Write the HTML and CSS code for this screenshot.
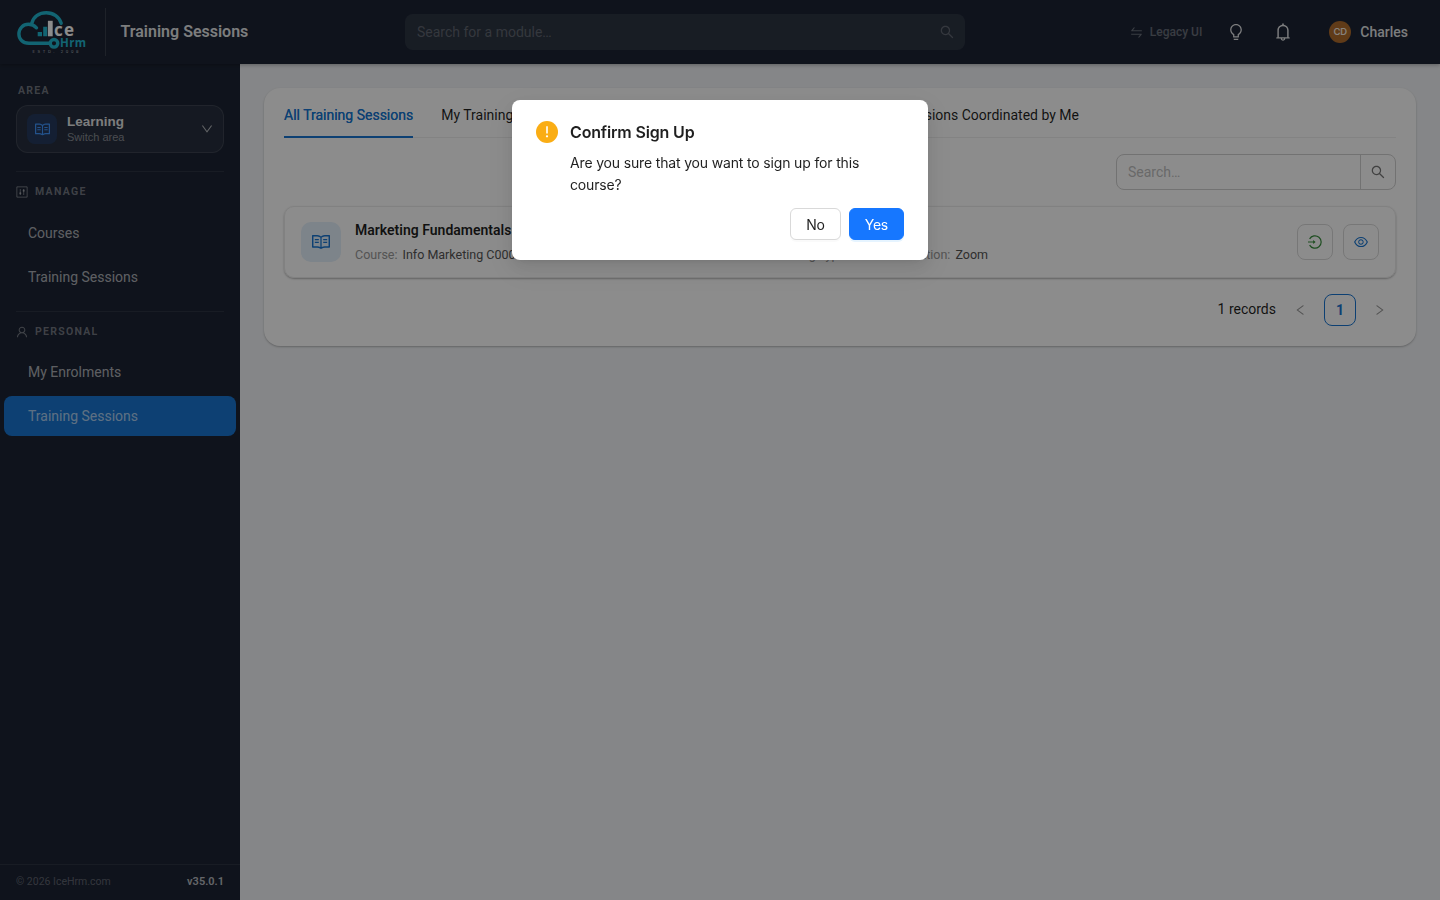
FILE: index.html
```html
<!DOCTYPE html>
<html lang="en">
<head>
    <meta charset="UTF-8">
    <meta name="viewport" content="width=device-width, initial-scale=1.0">
    <title>Training Sessions</title>
    <link rel="stylesheet" href="styles.css">
</head>
<body>

    <!-- Shared icons -->
    <svg class="sprite" xmlns="http://www.w3.org/2000/svg">
        <symbol id="search" viewBox="64 64 896 896"><path d="M909.6 854.5L649.9 594.8C690.2 542.7 712 479 712 412c0-80.2-31.3-155.4-87.9-212.1-56.6-56.7-132-87.9-212.1-87.9s-155.5 31.3-212.1 87.9C143.2 256.5 112 331.8 112 412c0 80.1 31.3 155.5 87.9 212.1C256.5 680.8 331.8 712 412 712c67 0 130.6-21.8 182.7-62l259.7 259.6a8.2 8.2 0 0011.6 0l43.6-43.5a8.2 8.2 0 000-11.6zM570.4 570.4C528 612.7 471.8 636 412 636s-116-23.3-158.4-65.6C211.3 528 188 471.8 188 412s23.3-116.1 65.6-158.4C296 211.3 352.2 188 412 188s116.1 23.2 158.4 65.6S636 352.2 636 412s-23.3 116.1-65.6 158.4z"/></symbol>
        <symbol id="swap" viewBox="64 64 896 896"><path d="M847.9 592H152c-4.4 0-8 3.6-8 8v60c0 4.4 3.6 8 8 8h605.2L612.9 851c-4.1 5.2-.4 13 6.3 13h72.5c4.9 0 9.5-2.2 12.6-6.1l168.8-214.1c16.5-21 1.6-51.8-25.2-51.8zM872 356H266.8l144.3-183c4.1-5.2.4-13-6.3-13h-72.5c-4.9 0-9.5 2.2-12.6 6.1L150.9 380.2c-16.5 21-1.6 51.8 25.1 51.8h696c4.4 0 8-3.6 8-8v-60c0-4.4-3.6-8-8-8z"/></symbol>
        <symbol id="bulb" viewBox="64 64 896 896"><path d="M632 888H392c-4.4 0-8 3.6-8 8v32c0 17.7 14.3 32 32 32h192c17.7 0 32-14.3 32-32v-32c0-4.4-3.6-8-8-8zM512 64c-181.1 0-328 146.9-328 328 0 121.4 66 227.4 164 284.1V792c0 17.7 14.3 32 32 32h264c17.7 0 32-14.3 32-32V676.1c98-56.7 164-162.7 164-284.1 0-181.1-146.9-328-328-328zm127.9 549.8L604 634.6V752H420V634.6l-35.9-20.8C305.4 568.3 256 484.5 256 392c0-141.4 114.6-256 256-256s256 114.6 256 256c0 92.5-49.4 176.3-128.1 221.8z"/></symbol>
        <symbol id="bell" viewBox="64 64 896 896"><path d="M816 768h-24V428c0-141.1-104.3-257.7-240-277.1V112c0-22.1-17.9-40-40-40s-40 17.9-40 40v38.9c-135.7 19.4-240 136-240 277.1v340h-24c-17.7 0-32 14.3-32 32v32c0 4.4 3.6 8 8 8h216c0 61.8 50.2 112 112 112s112-50.2 112-112h216c4.4 0 8-3.6 8-8v-32c0-17.7-14.3-32-32-32zM512 888c-26.5 0-48-21.5-48-48h96c0 26.5-21.5 48-48 48zM304 768V428c0-55.6 21.6-107.8 60.9-147.1S456.4 220 512 220c55.6 0 107.8 21.6 147.1 60.9S720 372.4 720 428v340H304z"/></symbol>
        <symbol id="read" viewBox="64 64 896 896"><path d="M928 161H699.2c-49.1 0-97.1 14.1-138.4 40.7L512 233l-48.8-31.3A255.2 255.2 0 00324.8 161H96c-17.7 0-32 14.3-32 32v568c0 17.7 14.3 32 32 32h228.8c49.1 0 97.1 14.1 138.4 40.7l44.4 28.6c1.3.8 2.8 1.3 4.3 1.3s3-.4 4.3-1.3l44.4-28.6C602 807.1 650.1 793 699.2 793H928c17.7 0 32-14.3 32-32V193c0-17.7-14.3-32-32-32zM324.8 721H136V233h188.8c35.4 0 69.8 10.1 99.5 29.2l48.8 31.3 6.9 4.5v462c-47.6-25.6-100.8-39-155.2-39zm563.2 0H699.2c-54.4 0-107.6 13.4-155.2 39V298l6.9-4.5 48.8-31.3c29.7-19.1 64.1-29.2 99.5-29.2H888v488zM396.9 361H211.1c-3.9 0-7.1 3.4-7.1 7.5v45c0 4.1 3.2 7.5 7.1 7.5h185.7c3.9 0 7.1-3.4 7.1-7.5v-45c.1-4.1-3.1-7.5-7-7.5zm223.1 7.5v45c0 4.1 3.2 7.5 7.1 7.5h185.7c3.9 0 7.1-3.4 7.1-7.5v-45c0-4.1-3.2-7.5-7.1-7.5H627.1c-3.9 0-7.1 3.4-7.1 7.5zM396.9 501H211.1c-3.9 0-7.1 3.4-7.1 7.5v45c0 4.1 3.2 7.5 7.1 7.5h185.7c3.9 0 7.1-3.4 7.1-7.5v-45c.1-4.1-3.1-7.5-7-7.5zm416 0H627.1c-3.9 0-7.1 3.4-7.1 7.5v45c0 4.1 3.2 7.5 7.1 7.5h185.7c3.9 0 7.1-3.4 7.1-7.5v-45c.1-4.1-3.1-7.5-7-7.5z"/></symbol>
        <symbol id="down" viewBox="64 64 896 896"><path d="M884 256h-75c-5.1 0-9.9 2.5-12.9 6.6L512 654.2 227.9 262.6c-3-4.1-7.8-6.6-12.9-6.6h-75c-6.5 0-10.3 7.4-6.5 12.7l352.6 486.1c12.8 17.6 39 17.6 51.7 0l352.6-486.1c3.9-5.3.1-12.7-6.4-12.7z"/></symbol>
        <symbol id="user" viewBox="64 64 896 896"><path d="M858.5 763.6a374 374 0 00-80.6-119.5 375.63 375.63 0 00-119.5-80.6c-.4-.2-.8-.3-1.2-.5C719.5 518 760 444.7 760 362c0-137-111-248-248-248S264 225 264 362c0 82.7 40.5 156 102.8 201.1-.4.2-.8.3-1.2.5-44.8 18.9-85 46-119.5 80.6a375.63 375.63 0 00-80.6 119.5A371.7 371.7 0 00136 901.8a8 8 0 008 8.2h60c4.4 0 7.9-3.5 8-7.8 2-77.2 33-149.5 87.8-204.3 56.7-56.7 132-87.9 212.2-87.9s155.5 31.2 212.2 87.9C779 752.7 810 825 812 902.2c.1 4.4 3.6 7.8 8 7.8h60a8 8 0 008-8.2c-1-47.8-10.9-94.3-29.5-138.2zM512 534c-45.9 0-89.1-17.9-121.6-50.4S340 407.9 340 362c0-45.9 17.9-89.1 50.4-121.6S466.1 190 512 190s89.1 17.9 121.6 50.4S684 316.1 684 362c0 45.9-17.9 89.1-50.4 121.6S557.9 534 512 534z"/></symbol>
        <symbol id="eye" viewBox="64 64 896 896"><path d="M942.2 486.2C847.4 286.5 704.1 186 512 186c-192.2 0-335.4 100.5-430.2 300.3a60.3 60.3 0 000 51.5C176.6 737.5 319.9 838 512 838c192.2 0 335.4-100.5 430.2-300.3 7.7-16.2 7.7-35 0-51.5zM512 766c-161.3 0-279.4-81.8-362.7-254C232.6 339.8 350.7 258 512 258c161.3 0 279.4 81.8 362.7 254C791.5 684.2 673.4 766 512 766zm-4-430c-97.2 0-176 78.8-176 176s78.8 176 176 176 176-78.8 176-176-78.8-176-176-176zm0 288c-61.9 0-112-50.1-112-112s50.1-112 112-112 112 50.1 112 112-50.1 112-112 112z"/></symbol>
        <symbol id="control" viewBox="0 0 14 14"><path d="M1 1h12v12H1z M5 3.500v7 M9 3.500v7" fill="none" stroke="currentColor" stroke-width="1.1"/><circle cx="5" cy="8.6" r="1.300"/><circle cx="9" cy="5.400" r="1.300"/></symbol>
        <symbol id="login" viewBox="0 0 14 14"><path d="M1.6 3.9A6.2 6.2 0 1 1 1.6 10.1" fill="none" stroke="currentColor" stroke-width="1.2"/><path d="M0 6.5h5.2V5.1L7.6 7 5.2 8.9V7.5H0z"/></symbol>
    </svg>

    <!-- Header -->
    <div class="header">
        <div class="logo">
            <svg width="72" height="46" viewBox="0 0 72 46">
                <g fill="none" stroke="#22b6d0" stroke-width="3.4" stroke-linecap="round">
                    <path d="M34 34.300H13C6.500 34.300 2.900 30 2.900 25C2.900 19.500 7 15.300 12.500 15.300C15.800 15.300 18.500 16.700 20.500 18.800"/>
                    <path d="M15.700 14.500C17.500 7.500 23.500 3.700 30.300 3.700C37.500 3.700 43.300 8 45.200 14.300"/>
                    <circle cx="38" cy="34.300" r="3.800"/>
                </g>
                <path d="M21.700 23h4.300v4.300h-4.300z M27.200 17.700h4v9.600h-4z" fill="#22b6d0"/>
                <path d="M31.900 11.800h4.800v15.500h-4.800z" fill="#fff"/>
                <text class="logo-ice" x="38" y="27.300" textLength="20">ce</text>
                <text class="logo-hrm" x="44" y="37.500" textLength="26">Hrm</text>
                <text class="logo-estd" x="16.500" y="44" textLength="46">ESTD. 2008</text>
            </svg>
        </div>
        <h1>Training Sessions</h1>
        <div class="module-search">
            <span>Search for a module…</span>
            <svg class="icon"><use href="#search"/></svg>
        </div>
        <div class="header-right">
            <a class="legacy"><svg class="icon"><use href="#swap"/></svg>Legacy UI</a>
            <svg class="icon bulb"><use href="#bulb"/></svg>
            <svg class="icon bell"><use href="#bell"/></svg>
            <div class="avatar">CD</div>
            <span class="user-name">Charles</span>
        </div>
    </div>

    <div class="layout">
        <!-- Sidebar -->
        <div class="sidebar">
            <div class="area-label">AREA</div>
            <div class="area-switch">
                <div class="area-icon"><svg class="icon"><use href="#read"/></svg></div>
                <div class="area-text">
                    <b>Learning</b>
                    <span>Switch area</span>
                </div>
                <svg class="icon arrow"><use href="#down"/></svg>
            </div>

            <div class="group-title"><svg class="icon"><use href="#control"/></svg>MANAGE</div>
            <a class="menu-item">Courses</a>
            <a class="menu-item">Training Sessions</a>

            <div class="group-title personal"><svg class="icon"><use href="#user"/></svg>PERSONAL</div>
            <a class="menu-item">My Enrolments</a>
            <a class="menu-item active">Training Sessions</a>

            <div class="sidebar-footer">
                <span>© 2026 IceHrm.com</span>
                <b>v35.0.1</b>
            </div>
        </div>

        <!-- Main Content -->
        <div class="content">
            <div class="card">
                <div class="tabs">
                    <div class="tab active">All Training Sessions</div>
                    <div class="tab">My Training Sessions</div>
                    <div class="tab last">Training Sessions Coordinated by Me</div>
                </div>

                <div class="search-row">
                    <div class="search-box">
                        <div class="search-input">Search…</div>
                        <div class="search-button"><svg class="icon"><use href="#search"/></svg></div>
                    </div>
                </div>

                <div class="session">
                    <div class="session-icon"><svg class="icon"><use href="#read"/></svg></div>
                    <div class="session-info">
                        <h3>Marketing Fundamentals</h3>
                        <div class="meta">
                            <div><span>Course:</span>Info Marketing C0001</div>
                            <div class="type"><span>Training Type:</span>Online</div>
                            <div class="location"><span>Location:</span>Zoom</div>
                        </div>
                    </div>
                    <div class="actions">
                        <div class="action sign-up"><svg class="icon"><use href="#login"/></svg></div>
                        <div class="action view"><svg class="icon"><use href="#eye"/></svg></div>
                    </div>
                </div>

                <div class="pagination">
                    <span class="total">1 records</span>
                    <svg class="icon prev"><use href="#down"/></svg>
                    <div class="page">1</div>
                    <svg class="icon next"><use href="#down"/></svg>
                </div>
            </div>
        </div>
    </div>

    <!-- Confirm Dialog -->
    <div class="mask">
        <div class="modal">
            <div class="modal-body">
                <svg class="warning" viewBox="0 0 22 22">
                    <circle cx="11" cy="11" r="11" fill="#faad14"/>
                    <path d="M10.200 5.300h1.600v7.200h-1.600z" fill="#fff"/>
                    <circle cx="11" cy="15.300" r="1.150" fill="#fff"/>
                </svg>
                <div class="modal-text">
                    <h2>Confirm Sign Up</h2>
                    <p>Are you sure that you want to sign up for this course?</p>
                </div>
            </div>
            <div class="modal-buttons">
                <button>No</button>
                <button class="primary">Yes</button>
            </div>
        </div>
    </div>

</body>
</html>
```
FILE: styles.css
```css
* {
    box-sizing: border-box;
}
body {
    font-family: Roboto, sans-serif;
    font-size: 14px;
    margin: 0;
    height: 100vh;
    overflow: hidden;
    background-color: #f2f4f7;
    color: rgba(0, 0, 0, 0.88);
}
h1, h2, h3, p {
    margin: 0;
}
.sprite {
    display: none;
}
.icon {
    width: 14px;
    height: 14px;
    fill: currentColor;
    flex-shrink: 0;
}
.header {
    height: 64px;
    background-color: #1c2434;
    color: rgba(255, 255, 255, 0.88);
    display: flex;
    align-items: center;
    position: relative;
    box-shadow: 0 1px 4px rgba(0, 0, 0, 0.3);
}
.logo {
    width: 106px;
    height: 48px;
    padding: 1px 0 0 16px;
    border-right: 1px solid rgba(255, 255, 255, 0.12);
}
.logo-ice {
    font: bold 17px "Open Sans", sans-serif;
    fill: #fff;
}
.logo-hrm {
    font: bold 11.5px "Open Sans", sans-serif;
    fill: #22b6d0;
}
.logo-estd {
    font: 4px Inter, sans-serif;
    fill: #b0b5bd;
}
.header h1 {
    width: 299px;
    padding: 0 0 1px 14.5px;
    font-size: 16px;
    font-weight: 600;
}
.module-search {
    width: 560px;
    height: 36px;
    padding: 0 11px 0 12px;
    border-radius: 8px;
    background-color: rgba(255, 255, 255, 0.08);
    color: rgba(255, 255, 255, 0.25);
    display: flex;
    align-items: center;
    justify-content: space-between;
}
.header-right {
    flex: 1;
    display: flex;
    align-items: center;
    justify-content: flex-end;
    padding-right: 32px;
}
.legacy {
    display: flex;
    align-items: center;
    gap: 7px;
    font-size: 12px;
    font-weight: 500;
    color: rgba(255, 255, 255, 0.35);
}
.legacy .icon {
    width: 13px;
    height: 13px;
}
.bulb {
    width: 16px;
    height: 16px;
    margin-left: 26px;
}
.bell {
    width: 18px;
    height: 18px;
    margin-left: 30px;
}
.avatar {
    width: 22px;
    height: 22px;
    margin: 0 9px 0 37px;
    border-radius: 50%;
    background-color: #b06c2c;
    font: 600 9.5px/22px Inter, sans-serif;
    text-align: center;
}
.user-name {
    font-weight: 500;
}
.layout {
    display: flex;
    height: calc(100vh - 64px);
}
.sidebar {
    width: 240px;
    background-color: #1c2434;
    color: rgba(255, 255, 255, 0.65);
    display: flex;
    flex-direction: column;
}
.area-label {
    margin: 20px 18px 8px;
    font-size: 10.5px;
    line-height: 13px;
    font-weight: 600;
    letter-spacing: 1.3px;
    color: rgba(255, 255, 255, 0.4);
}
.area-switch {
    height: 48px;
    margin: 0 16px 18px;
    padding: 0 10px;
    border: 1px solid rgba(255, 255, 255, 0.1);
    border-radius: 12px;
    background-color: rgba(255, 255, 255, 0.05);
    display: flex;
    align-items: center;
    gap: 10px;
}
.area-icon {
    width: 30px;
    height: 30px;
    border-radius: 8px;
    background-color: #253a5e;
    color: #4096ff;
    display: flex;
    align-items: center;
    justify-content: center;
}
.area-icon .icon {
    width: 15px;
    height: 15px;
}
.area-text {
    flex: 1;
    padding-bottom: 2px;
    font-family: "Liberation Sans", sans-serif;
}
.area-text b, .area-text span {
    display: block;
}
.area-text b {
    font-size: 13.5px;
    line-height: 17px;
    color: rgba(255, 255, 255, 0.88);
}
.area-text span {
    font-size: 11px;
    line-height: 14px;
    color: rgba(255, 255, 255, 0.45);
}
.arrow {
    width: 12px;
    height: 12px;
}
.group-title {
    height: 40px;
    margin: 0 16px;
    border-top: 1px solid rgba(255, 255, 255, 0.07);
    display: flex;
    align-items: center;
    gap: 7px;
    font-size: 10.5px;
    font-weight: 600;
    letter-spacing: 1.3px;
    color: rgba(255, 255, 255, 0.4);
}
.group-title .icon {
    width: 12px;
    height: 12px;
}
.group-title.personal {
    margin-top: 12px;
    margin-bottom: -1px;
}
.menu-item {
    height: 40px;
    margin: 2px 4px;
    padding-left: 24px;
    border-radius: 8px;
    line-height: 40px;
}
.menu-item.active {
    background-color: #1976d2;
}
.sidebar-footer {
    height: 36px;
    margin-top: auto;
    padding: 0 16px 2px;
    border-top: 1px solid rgba(255, 255, 255, 0.07);
    display: flex;
    align-items: center;
    justify-content: space-between;
    font-size: 10.5px;
    color: rgba(255, 255, 255, 0.3);
}
.sidebar-footer b {
    font-size: 11px;
    font-weight: 600;
    color: rgba(255, 255, 255, 0.7);
}
.content {
    flex: 1;
    padding: 24px;
}
.card {
    height: 258px;
    padding: 0 20px;
    background-color: white;
    border-radius: 16px;
    box-shadow: 0 1px 2px rgba(0, 0, 0, 0.25);
}
.tabs {
    height: 50px;
    border-bottom: 1px solid #eeeeee;
    display: flex;
    gap: 28px;
}
.tab {
    height: 50px;
    line-height: 55px;
    white-space: nowrap;
}
.tab.active {
    color: #1976d2;
    border-bottom: 2px solid #1976d2;
    text-shadow: 0 0 0.25px currentColor;
}
.tab.last {
    margin-left: auto;
    margin-right: 317px;
}
.search-row {
    display: flex;
    justify-content: flex-end;
    margin: 16px 0;
}
.search-box {
    width: 280px;
    height: 36px;
    border: 1px solid #d0d0d0;
    border-radius: 8px;
    display: flex;
}
.search-input {
    flex: 1;
    padding-left: 11px;
    line-height: 35px;
    color: #bfbfbf;
}
.search-button {
    width: 35px;
    border-left: 1px solid #d0d0d0;
    color: #777;
    display: flex;
    align-items: center;
    justify-content: center;
}
.session {
    height: 72px;
    padding: 0 16px;
    border: 1px solid #ebebeb;
    border-radius: 10px;
    box-shadow: 0 1px 2px rgba(0, 0, 0, 0.3);
    display: flex;
    align-items: center;
}
.session-icon {
    width: 40px;
    height: 40px;
    margin-right: 14px;
    border-radius: 10px;
    background-color: #e3f0fb;
    color: #1976d2;
    display: flex;
    align-items: center;
    justify-content: center;
}
.session-icon .icon {
    width: 18px;
    height: 18px;
}
.session-info {
    flex: 1;
}
.session h3 {
    font-size: 14px;
    line-height: 20px;
    font-weight: 600;
}
.meta {
    display: flex;
    margin-top: 6px;
    font-size: 12.5px;
    line-height: 18px;
    color: #555;
}
.meta span {
    margin-right: 5px;
    color: #999;
}
.meta .type {
    width: 128px;
    margin-left: auto;
}
.meta .location {
    margin-right: 309px;
}
.actions {
    display: flex;
    gap: 10px;
}
.action {
    width: 36px;
    height: 36px;
    border: 1px solid #d9d9d9;
    border-radius: 8px;
    display: flex;
    align-items: center;
    justify-content: center;
}
.sign-up {
    color: #388e3c;
}
.view {
    color: #1976d2;
}
.pagination {
    margin-top: 16px;
    padding-right: 10px;
    display: flex;
    align-items: center;
    justify-content: flex-end;
}
.pagination .icon {
    width: 12px;
    height: 12px;
    color: #999;
}
.total {
    padding-bottom: 2px;
}
.prev {
    margin: 0 18px;
    transform: rotate(90deg);
}
.next {
    margin-left: 18px;
    transform: rotate(-90deg);
}
.page {
    width: 32px;
    height: 32px;
    border: 1px solid #1976d2;
    border-radius: 8px;
    color: #1976d2;
    font-weight: 700;
    line-height: 31px;
    text-align: center;
}
.mask {
    position: fixed;
    inset: 0;
    background-color: rgba(0, 0, 0, 0.45);
}
.modal {
    width: 416px;
    height: 160px;
    margin: 100px auto 0;
    padding: 20px 24px;
    background-color: white;
    border-radius: 8px;
    box-shadow: 0 6px 16px 0 rgba(0, 0, 0, 0.08), 0 3px 6px -4px rgba(0, 0, 0, 0.12), 0 9px 28px 8px rgba(0, 0, 0, 0.05);
    font-family: Inter, sans-serif;
    letter-spacing: -0.16px;
}
.modal-body {
    display: flex;
    gap: 12px;
}
.warning {
    width: 22px;
    height: 22px;
    margin-top: 1px;
    flex-shrink: 0;
}
.modal-text h2 {
    font-size: 16px;
    line-height: 24px;
    font-weight: 600;
}
.modal-text p {
    margin-top: 8px;
    max-width: 300px;
    line-height: 22px;
}
.modal-buttons {
    display: flex;
    justify-content: flex-end;
    gap: 8px;
    margin-top: 12px;
}
.modal-buttons button {
    height: 32px;
    padding: 0 15px;
    border: 1px solid #d9d9d9;
    border-radius: 6px;
    background-color: white;
    color: rgba(0, 0, 0, 0.88);
    font: 14px Inter, sans-serif;
    letter-spacing: -0.25px;
    box-shadow: 0 2px 0 rgba(0, 0, 0, 0.02);
}
.modal-buttons .primary {
    border-color: #1677ff;
    background-color: #1677ff;
    color: white;
    box-shadow: 0 2px 0 rgba(5, 145, 255, 0.1);
}
```
